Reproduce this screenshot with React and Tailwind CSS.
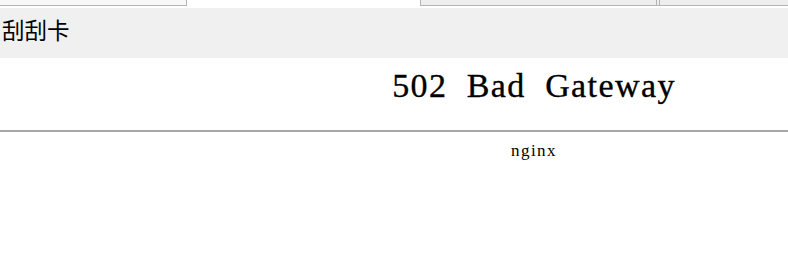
const serif = { fontFamily: '"Liberation Serif", "DejaVu Serif", serif' };

export default function App() {
  return (
    <div className="w-[788px] h-[268px] overflow-hidden bg-white">
      <div className="w-[1068px]">
        {/* tab strip */}
        <div className="flex h-[8px] bg-white">
          <div className="w-[187px] h-[6px] bg-[#f8f8f8] border-r border-b border-[#b4b4b4]" />
          <div className="w-[233px] h-[6px]" />
          <div className="w-[237px] h-[6px] bg-[#eeeeee] border-l border-r border-b border-[#b4b4b4]" />
          <div className="w-[2px] h-[6px] bg-[#eeeeee] border-b border-[#b4b4b4]" />
          <div className="flex-1 h-[6px] bg-[#eeeeee] border-l border-b border-[#b4b4b4]" />
        </div>

        {/* title band */}
        <div
          className="h-[50px] bg-[#f0f0f0] flex items-center pl-[2px] pb-[7px] text-[22.5px] text-black"
          style={{ fontFamily: '"Noto Sans CJK SC", "Noto Sans", sans-serif' }}
        >
          刮刮卡
        </div>

        {/* error page */}
        <div className="pt-[7.5px] text-black" style={serif}>
          <h1 className="text-center text-[34px] leading-[40px] tracking-[1.4px] [word-spacing:9.5px] [-webkit-text-stroke:0.35px_#000]">
            502 Bad Gateway
          </h1>
          <div className="mt-[24px] h-[2px] bg-[#a6a6a6]" />
          <div className="mt-[9px] text-center text-[17px] leading-[20px] tracking-[1.5px]">nginx</div>
        </div>
      </div>
    </div>
  );
}
